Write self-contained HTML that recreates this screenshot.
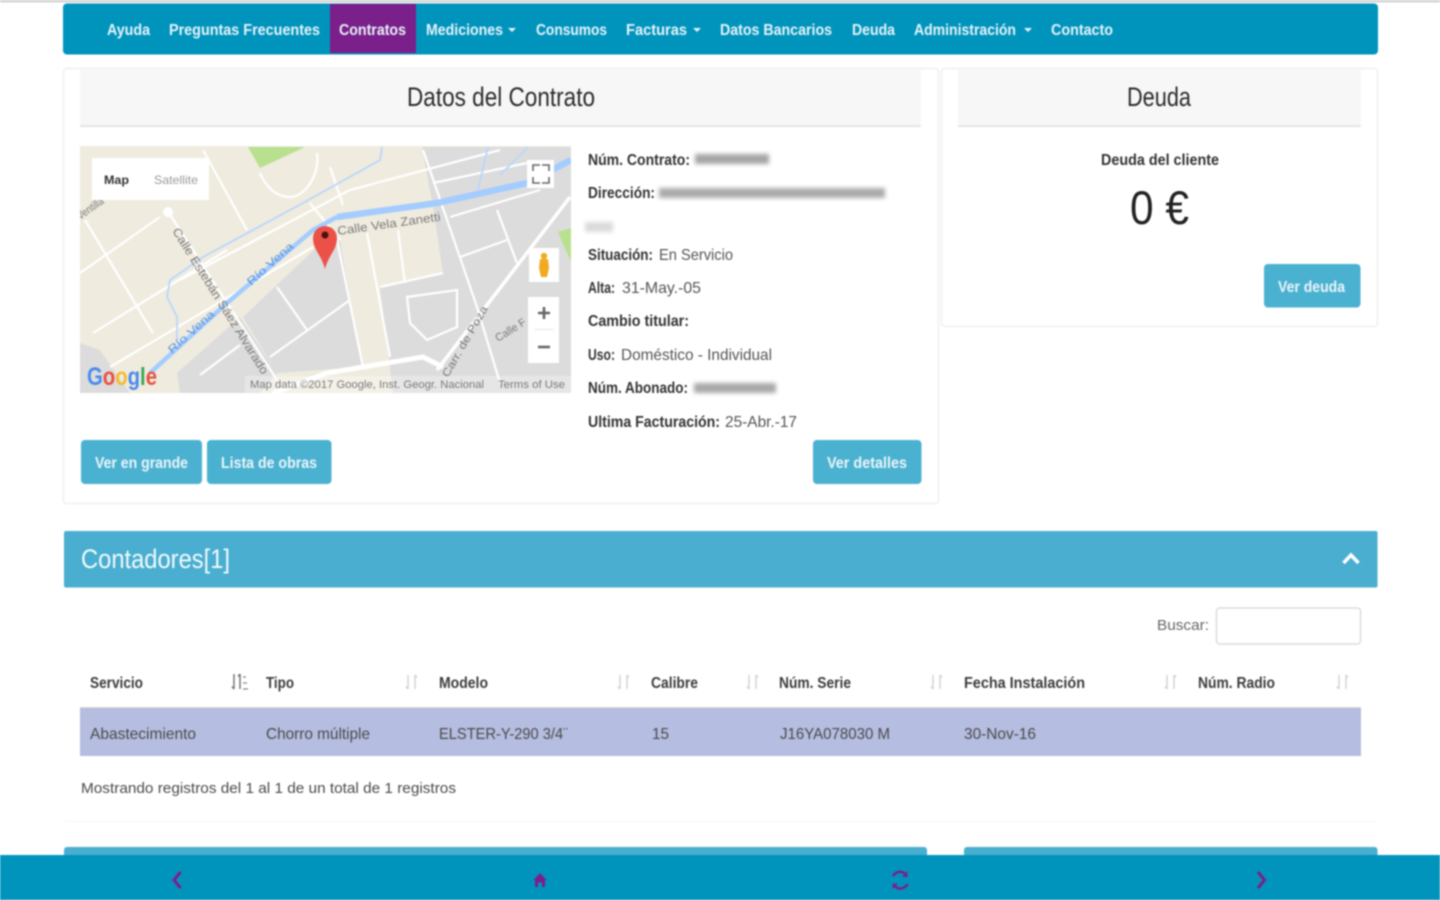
<!DOCTYPE html>
<html lang="es"><head><meta charset="utf-8"><title>Datos del Contrato</title>
<style>
html,body{margin:0;padding:0;background:#fff;width:1440px;height:900px;overflow:hidden}
svg{display:block;filter:blur(.85px)}
text{font-family:"Liberation Sans",sans-serif}
.n{font-size:16px;font-weight:700;fill:#e6f3f8}
.b{font-size:16px;font-weight:700;fill:#333}
.r{font-size:16px;fill:#555}
.h{font-size:27px;fill:#2b2b2b}
.w{font-size:16px;font-weight:700;fill:#e8f5fa}
.t{font-size:16px;font-weight:700;fill:#3c3c3c}
.d{font-size:16px;fill:#4a4a4a}
.s{stroke:#fff;fill:none}
.sort{stroke:#d4d4d4;stroke-width:1.500;fill:none}
.ml{font-size:11px;fill:#7a7a7a}
</style></head><body>
<svg width="1440" height="900" viewBox="0 0 1440 900" xmlns="http://www.w3.org/2000/svg">
<defs>
<clipPath id="mc"><rect x="80" y="146" width="491" height="247"/></clipPath>
<filter id="bl" x="-20%" y="-50%" width="140%" height="200%"><feGaussianBlur stdDeviation="2.200"/></filter>
</defs>
<rect width="1440" height="900" fill="#fff"/>
<rect width="1440" height="2.500" fill="#d6d6d2"/>

<!-- Navbar -->
<rect x="63" y="3.500" width="1315" height="51" rx="4" fill="#0094bd"/>
<rect x="330" y="4" width="86" height="49" fill="#7b1f8a"/>
<text class="n" x="107" y="35" textLength="43" lengthAdjust="spacingAndGlyphs">Ayuda</text>
<text class="n" x="169" y="35" textLength="151" lengthAdjust="spacingAndGlyphs">Preguntas Frecuentes</text>
<text class="n" x="339" y="35" textLength="67" lengthAdjust="spacingAndGlyphs">Contratos</text>
<text class="n" x="426" y="35" textLength="77" lengthAdjust="spacingAndGlyphs">Mediciones</text>
<path d="M508 28h8l-4 4z" fill="#e6f3f8"/>
<text class="n" x="536" y="35" textLength="71" lengthAdjust="spacingAndGlyphs">Consumos</text>
<text class="n" x="626" y="35" textLength="61" lengthAdjust="spacingAndGlyphs">Facturas</text>
<path d="M693 28h8l-4 4z" fill="#e6f3f8"/>
<text class="n" x="720" y="35" textLength="112" lengthAdjust="spacingAndGlyphs">Datos Bancarios</text>
<text class="n" x="852" y="35" textLength="43" lengthAdjust="spacingAndGlyphs">Deuda</text>
<text class="n" x="914" y="35" textLength="102" lengthAdjust="spacingAndGlyphs">Administración</text>
<path d="M1024 28h8l-4 4z" fill="#e6f3f8"/>
<text class="n" x="1051" y="35" textLength="62" lengthAdjust="spacingAndGlyphs">Contacto</text>

<!-- Panel 1 -->
<rect x="63.500" y="68.500" width="875" height="435" rx="3" fill="#fff" stroke="#efefef" stroke-width="1.500"/>
<rect x="80" y="70" width="841" height="56" fill="#f7f7f7"/>
<rect x="80" y="125" width="841" height="2" fill="#e6e6e6"/>
<text class="h" x="407" y="106" textLength="188" lengthAdjust="spacingAndGlyphs">Datos del Contrato</text>

<!-- Panel 2 -->
<rect x="941.500" y="68.500" width="436" height="258" rx="3" fill="#fff" stroke="#efefef" stroke-width="1.500"/>
<rect x="958" y="70" width="403" height="56" fill="#f7f7f7"/>
<rect x="958" y="125" width="403" height="2" fill="#e6e6e6"/>
<text class="h" x="1127" y="106" textLength="64" lengthAdjust="spacingAndGlyphs">Deuda</text>
<text class="b" x="1101" y="165" textLength="118" lengthAdjust="spacingAndGlyphs">Deuda del cliente</text>
<text x="1130" y="224" font-size="47" fill="#222" textLength="59" lengthAdjust="spacingAndGlyphs">0 €</text>
<rect x="1264" y="264" width="96.500" height="43.500" rx="4" fill="#4bb1d0"/>
<text class="w" x="1278" y="292" textLength="67" lengthAdjust="spacingAndGlyphs">Ver deuda</text>

<!-- Map -->
<g clip-path="url(#mc)">
<rect x="80" y="146" width="491" height="247" fill="#efebdf"/>
<g fill="#dcdcdc">
<polygon points="422,147 571,147 571,393 393,393 380,287 443,273 433,207"/>
<polygon points="317,247 340,240 362,367 277,373 243,317"/>
<polygon points="177,373 240,317 277,373 260,393 180,393"/>
<polygon points="80,343 100,350 130,393 80,393"/>
</g>
<g fill="#b8e08e">
<polygon points="248,147 305,147 260,168"/>
<polygon points="558,232 571,228 571,262"/>
</g>
<g class="s" stroke-width="2.200">
<path d="M167 210L277 380"/><path d="M85 220L153 333"/><path d="M80 273L160 217"/>
<path d="M93 333L227 250"/><path d="M203 150L247 230"/><path d="M110 367L313 247"/>
<path d="M277 287L307 330"/><path d="M270 357L350 300"/><path d="M337 240L363 367"/>
<path d="M367 233L390 357"/><path d="M398 230L405 283"/><path d="M380 287L443 273"/>
<path d="M423 150L477 307L500 383"/><path d="M433 183L527 163"/><path d="M450 217L540 190"/>
<path d="M460 257L507 240"/><path d="M497 210L517 263"/><path d="M310 203L340 240"/>
<path d="M317 153C320 175 305 197 290 197C275 197 265 185 260 173"/>
<path d="M407 297L457 290L457 327L427 340L410 323Z"/>
<path d="M180 280L350 190L500 150"/>
<path d="M200 375L240 345"/><path d="M330 167L343 205"/>
</g>
<path d="M570 197L437 370" class="s" stroke-width="3.500"/>
<path d="M273 393L327 373L423 357L443 367" class="s" stroke-width="5"/>
<circle cx="168" cy="212" r="5" fill="#fff"/>
<path d="M150 373L227 303L313 230L337 217" fill="none" stroke="#a3ccff" stroke-width="4.500"/>
<path d="M337 217L437 203L527 183L571 160" fill="none" stroke="#a3ccff" stroke-width="6.500"/>
<path d="M177 343V317L167 297L170 280L203 257L303 203L380 160L382 147" fill="none" stroke="#b9d7fb" stroke-width="1.800"/>
<path d="M478 190L488 147M500 175L528 147" fill="none" stroke="#b9d7fb" stroke-width="1.800"/>

<text class="ml" transform="translate(338,235) rotate(-8)" textLength="104" lengthAdjust="spacingAndGlyphs" style="font-size:12px">Calle Vela Zanetti</text>
<text class="ml" transform="translate(172,231) rotate(58)" textLength="170" lengthAdjust="spacingAndGlyphs" style="font-size:12px">Calle Estebán Sáez Alvarado</text>
<text transform="translate(251,286) rotate(-42)" font-size="11" fill="#5b93d8" textLength="58" lengthAdjust="spacingAndGlyphs">Río Vena</text>
<text transform="translate(172,354) rotate(-42)" font-size="11" fill="#5b93d8" textLength="58" lengthAdjust="spacingAndGlyphs">Río Vena</text>
<text class="ml" transform="translate(448,378) rotate(-60)" textLength="80" lengthAdjust="spacingAndGlyphs">Carr. de Poza</text>
<text class="ml" transform="translate(498,342) rotate(-32)" textLength="34" lengthAdjust="spacingAndGlyphs">Calle F</text>
<text class="ml" transform="translate(80,220) rotate(-35)" textLength="30" lengthAdjust="spacingAndGlyphs">Ventilla</text>

<!-- Marker -->
<path d="M325 269C321 254 313 250 313 238A12 12 0 0 1 337 238C337 250 329 254 325 269Z" fill="#ec5148"/>
<circle cx="325" cy="235" r="3.500" fill="#4a1210"/>

<!-- Controls -->
<rect x="92" y="158" width="117" height="42" fill="#fff"/>
<text x="104" y="184" font-size="12" font-weight="700" fill="#333" textLength="25" lengthAdjust="spacingAndGlyphs">Map</text>
<text x="154" y="184" font-size="12" fill="#999" textLength="44" lengthAdjust="spacingAndGlyphs">Satellite</text>
<rect x="527" y="160" width="27" height="28" fill="#fff"/>
<path d="M533 171V165H540M542 165H549V171M549 177V183H542M540 183H533V177" fill="none" stroke="#666" stroke-width="1.600"/>
<rect x="529" y="248" width="30" height="34" fill="#fff"/>
<circle cx="544" cy="256" r="3.200" fill="#f3a91e"/>
<path d="M540 259H548L549 268L547 277H541L539 268Z" fill="#f3a91e"/>
<rect x="528" y="297" width="31" height="66" fill="#fff"/>
<rect x="534" y="329" width="20" height="1" fill="#e6e6e6"/>
<path d="M544 307V319M538 313H550" stroke="#666" stroke-width="2.600"/>
<path d="M538 347H550" stroke="#666" stroke-width="2.600"/>
<rect x="245" y="376" width="326" height="17" fill="#fff" opacity=".3"/>
<text class="ml" x="250" y="388" textLength="234" lengthAdjust="spacingAndGlyphs">Map data ©2017 Google, Inst. Geogr. Nacional</text>
<text class="ml" x="498" y="388" textLength="67" lengthAdjust="spacingAndGlyphs">Terms of Use</text>
<text x="87" y="385" font-size="25" font-weight="700" textLength="70" lengthAdjust="spacingAndGlyphs"><tspan fill="#4a8af0">G</tspan><tspan fill="#e8503f">o</tspan><tspan fill="#f5bb30">o</tspan><tspan fill="#4a8af0">g</tspan><tspan fill="#38a853">l</tspan><tspan fill="#e8503f">e</tspan></text>
</g>

<!-- Details -->
<text class="b" x="588" y="165" textLength="102" lengthAdjust="spacingAndGlyphs">Núm. Contrato:</text>
<rect x="695" y="154" width="74" height="10" fill="#a4a4a4" filter="url(#bl)"/>
<text class="b" x="588" y="198" textLength="67" lengthAdjust="spacingAndGlyphs">Dirección:</text>
<rect x="659" y="188" width="226" height="10" fill="#aaa" filter="url(#bl)"/>
<rect x="585" y="222" width="28" height="10" fill="#dadada" filter="url(#bl)"/>
<text class="b" x="588" y="260" textLength="65" lengthAdjust="spacingAndGlyphs">Situación:</text>
<text class="r" x="659" y="260" textLength="74" lengthAdjust="spacingAndGlyphs">En Servicio</text>
<text class="b" x="588" y="293" textLength="27" lengthAdjust="spacingAndGlyphs">Alta:</text>
<text class="r" x="622" y="293" textLength="79" lengthAdjust="spacingAndGlyphs">31-May.-05</text>
<text class="b" x="588" y="326" textLength="101" lengthAdjust="spacingAndGlyphs">Cambio titular:</text>
<text class="b" x="588" y="360" textLength="27" lengthAdjust="spacingAndGlyphs">Uso:</text>
<text class="r" x="621" y="360" textLength="151" lengthAdjust="spacingAndGlyphs">Doméstico - Individual</text>
<text class="b" x="588" y="393" textLength="100" lengthAdjust="spacingAndGlyphs">Núm. Abonado:</text>
<rect x="694" y="383" width="82" height="10" fill="#a8a8a8" filter="url(#bl)"/>
<text class="b" x="588" y="427" textLength="132" lengthAdjust="spacingAndGlyphs">Ultima Facturación:</text>
<text class="r" x="725" y="427" textLength="72" lengthAdjust="spacingAndGlyphs">25-Abr.-17</text>

<!-- Buttons -->
<rect x="81" y="440" width="121" height="44" rx="4" fill="#4bb1d0"/>
<text class="w" x="95" y="468" textLength="93" lengthAdjust="spacingAndGlyphs">Ver en grande</text>
<rect x="207" y="440" width="124.500" height="44" rx="4" fill="#4bb1d0"/>
<text class="w" x="221" y="468" textLength="96" lengthAdjust="spacingAndGlyphs">Lista de obras</text>
<rect x="813" y="440" width="108.500" height="44" rx="4" fill="#4bb1d0"/>
<text class="w" x="827" y="468" textLength="80" lengthAdjust="spacingAndGlyphs">Ver detalles</text>

<!-- Contadores -->
<rect x="64" y="531" width="1313.500" height="56.500" rx="2" fill="#49aed0"/>
<text x="81" y="568" font-size="27" fill="#f2fafc" textLength="149" lengthAdjust="spacingAndGlyphs">Contadores[1]</text>
<path d="M1343.500 563L1351 555L1358.500 563" fill="none" stroke="#fff" stroke-width="3.500"/>
<text class="d" x="1157" y="630" style="font-size:15px;fill:#666" textLength="52" lengthAdjust="spacingAndGlyphs">Buscar:</text>
<rect x="1216.500" y="608" width="144" height="36" rx="3" fill="#fff" stroke="#dcdcdc" stroke-width="1.500"/>

<text class="t" x="90" y="688" textLength="53" lengthAdjust="spacingAndGlyphs">Servicio</text>
<text class="t" x="266" y="688" textLength="28" lengthAdjust="spacingAndGlyphs">Tipo</text>
<text class="t" x="439" y="688" textLength="49" lengthAdjust="spacingAndGlyphs">Modelo</text>
<text class="t" x="651" y="688" textLength="47" lengthAdjust="spacingAndGlyphs">Calibre</text>
<text class="t" x="779" y="688" textLength="72" lengthAdjust="spacingAndGlyphs">Núm. Serie</text>
<text class="t" x="964" y="688" textLength="121" lengthAdjust="spacingAndGlyphs">Fecha Instalación</text>
<text class="t" x="1198" y="688" textLength="77" lengthAdjust="spacingAndGlyphs">Núm. Radio</text>
<path d="M234 674V689M232 686.500L234 689M240 674V689M240 674L238 676.500" fill="none" stroke="#777" stroke-width="1.500"/>
<path d="M243 689H248M243 683H247M243 677H246" stroke="#888" stroke-width="1.200"/>
<path class="sort" d="M408 675V689M406 686.500L408 689M415 675V689M415 675L417 677.500"/>
<path class="sort" d="M620 675V689M618 686.500L620 689M627 675V689M627 675L629 677.500"/>
<path class="sort" d="M749 675V689M747 686.500L749 689M756 675V689M756 675L758 677.500"/>
<path class="sort" d="M933 675V689M931 686.500L933 689M940 675V689M940 675L942 677.500"/>
<path class="sort" d="M1167 675V689M1165 686.500L1167 689M1174 675V689M1174 675L1176 677.500"/>
<path class="sort" d="M1339 675V689M1337 686.500L1339 689M1346 675V689M1346 675L1348 677.500"/>

<rect x="80" y="707" width="1281" height="1.500" fill="#d8dccc"/>
<rect x="80" y="708" width="1281" height="48" fill="#b5bde0"/>
<text class="d" x="90" y="739" textLength="106" lengthAdjust="spacingAndGlyphs">Abastecimiento</text>
<text class="d" x="266" y="739" textLength="104" lengthAdjust="spacingAndGlyphs">Chorro múltiple</text>
<text class="d" x="439" y="739" textLength="129" lengthAdjust="spacingAndGlyphs">ELSTER-Y-290 3/4¨</text>
<text class="d" x="652" y="739" textLength="17" lengthAdjust="spacingAndGlyphs">15</text>
<text class="d" x="780" y="739" textLength="110" lengthAdjust="spacingAndGlyphs">J16YA078030 M</text>
<text class="d" x="964" y="739" textLength="72" lengthAdjust="spacingAndGlyphs">30-Nov-16</text>
<text class="d" x="81" y="793" style="font-size:15px" textLength="375" lengthAdjust="spacingAndGlyphs">Mostrando registros del 1 al 1 de un total de 1 registros</text>
<rect x="64" y="821" width="1313" height="1" fill="#f6f6f6"/>

<!-- Lower panels -->
<rect x="64" y="847" width="863" height="12" rx="3" fill="#49aed0"/>
<rect x="964" y="847" width="413.500" height="12" rx="3" fill="#49aed0"/>

<!-- Footer -->
<rect x="0" y="855" width="1440" height="45" fill="#0094bd"/>
<path d="M180.500 872L174 880L180.500 888" fill="none" stroke="#7b1f8a" stroke-width="3"/>
<path d="M540 873L546.500 880H545V887H542V882.500H538V887H535V880H533.500Z" fill="#7b1f8a"/>
<path d="M893 876A8 8 0 0 1 906 874.500M907.500 884A8 8 0 0 1 894.500 886" fill="none" stroke="#7b1f8a" stroke-width="2.500"/>
<path d="M907.500 871V877H902Z M892.500 889V883.500H898Z" fill="#7b1f8a"/>
<path d="M1258 872L1264.500 880L1258 888" fill="none" stroke="#7b1f8a" stroke-width="3"/>
</svg>
</body></html>
